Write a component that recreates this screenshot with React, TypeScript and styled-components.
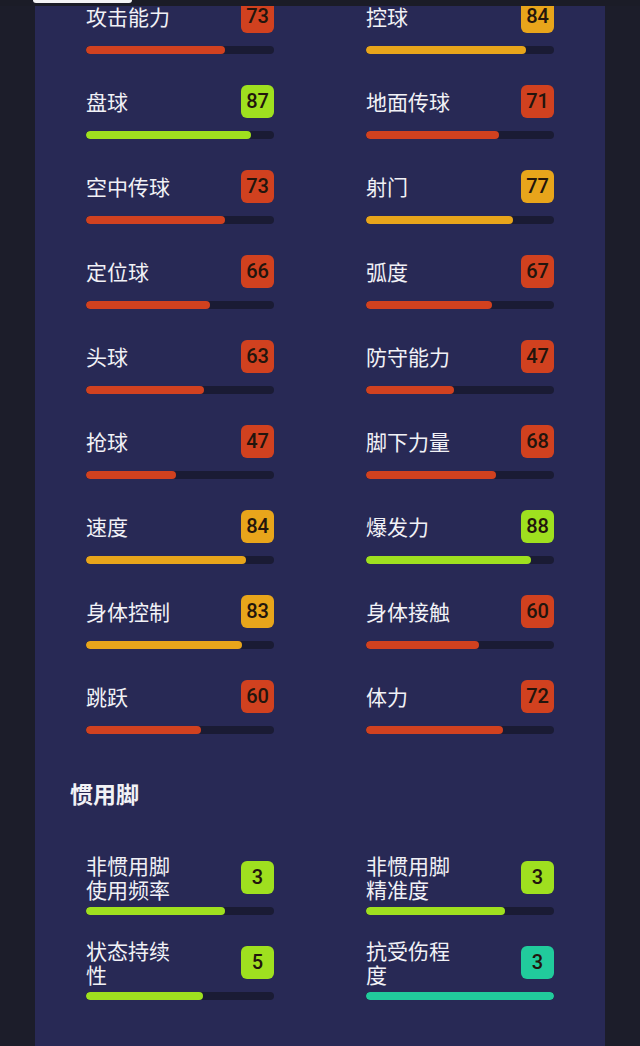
import type { ReactElement } from 'react';
import styled, { createGlobalStyle } from 'styled-components';

type Tone = 'red' | 'yellow' | 'green' | 'teal';

interface Stat {
	label: string;
	value: number;
	fill: number;
	tone: Tone;
}

const tones: Record<Tone, string> = {
	red: '#d1411f',
	yellow: '#e8a51b',
	green: '#9fe01f',
	teal: '#21cb9c',
};

const GlobalStyle = createGlobalStyle`
	html, body {
		margin: 0;
		padding: 0;
		background: #1c1d2a;
	}

	body {
		font-family: 'Noto Sans CJK SC', 'Noto Sans', sans-serif;
		overflow: hidden;
	}
`;

const Page = styled.div`
	width: 640px;
	height: 1046px;
	background: #1c1d2a;
	overflow: hidden;
`;

const TopStrip = styled.div`
	position: fixed;
	top: 0;
	left: 0;
	width: 640px;
	height: 6px;
	background: #1b1c27;
	z-index: 2;
`;

const Pill = styled.div`
	width: 99px;
	height: 3px;
	margin-left: 33px;
	background: #f4f4f6;
	border-radius: 0 0 6px 6px;
`;

const Panel = styled.section`
	display: flow-root;
	width: 570px;
	height: 1046px;
	margin-left: 35px;
	box-sizing: border-box;
	padding: 0 51px;
	background: #282955;
`;

const Grid = styled.div`
	display: grid;
	grid-template-columns: 188px 188px;
	column-gap: 92px;
	row-gap: 23px;
`;

const Scrolled = styled.div`
	margin-top: -8px;
`;

const Heading = styled.h2`
	margin: 44px 0 45px -16px;
	font-size: 23px;
	line-height: 30px;
	font-weight: 700;
	color: #f2f2f6;
`;

const Row = styled.div`
	display: flex;
	flex-direction: column;
`;

const Head = styled.div`
	display: flex;
	align-items: center;
	justify-content: space-between;
	height: 48px;
`;

const Label = styled.span`
	max-width: 90px;
	font-size: 21px;
	line-height: 24px;
	color: #f1f1f6;
`;

const Badge = styled.span<{ $tone: Tone }>`
	display: flex;
	align-items: center;
	justify-content: center;
	width: 33px;
	height: 33px;
	border-radius: 6px;
	background: ${({ $tone }) => tones[$tone]};
	color: #22150d;
	font-family: Roboto, 'Liberation Sans', sans-serif;
	font-size: 20px;
	font-weight: 500;
`;

const Track = styled.div`
	height: 8px;
	margin-top: 6px;
	border-radius: 4px;
	background: #1a1b34;
	overflow: hidden;
`;

const Fill = styled.div<{ $tone: Tone }>`
	height: 100%;
	border-radius: 4px;
	background: ${({ $tone }) => tones[$tone]};
`;

const stats: Stat[] = [
	{ label: '攻击能力', value: 73, fill: 74, tone: 'red' },
	{ label: '控球', value: 84, fill: 85, tone: 'yellow' },
	{ label: '盘球', value: 87, fill: 88, tone: 'green' },
	{ label: '地面传球', value: 71, fill: 71, tone: 'red' },
	{ label: '空中传球', value: 73, fill: 74, tone: 'red' },
	{ label: '射门', value: 77, fill: 78, tone: 'yellow' },
	{ label: '定位球', value: 66, fill: 66, tone: 'red' },
	{ label: '弧度', value: 67, fill: 67, tone: 'red' },
	{ label: '头球', value: 63, fill: 63, tone: 'red' },
	{ label: '防守能力', value: 47, fill: 47, tone: 'red' },
	{ label: '抢球', value: 47, fill: 48, tone: 'red' },
	{ label: '脚下力量', value: 68, fill: 69, tone: 'red' },
	{ label: '速度', value: 84, fill: 85, tone: 'yellow' },
	{ label: '爆发力', value: 88, fill: 88, tone: 'green' },
	{ label: '身体控制', value: 83, fill: 83, tone: 'yellow' },
	{ label: '身体接触', value: 60, fill: 60, tone: 'red' },
	{ label: '跳跃', value: 60, fill: 61, tone: 'red' },
	{ label: '体力', value: 72, fill: 73, tone: 'red' },
];

const foot: Stat[] = [
	{ label: '非惯用脚使用频率', value: 3, fill: 74, tone: 'green' },
	{ label: '非惯用脚精准度', value: 3, fill: 74, tone: 'green' },
	{ label: '状态持续性', value: 5, fill: 62, tone: 'green' },
	{ label: '抗受伤程度', value: 3, fill: 100, tone: 'teal' },
];

function StatRow({ data }: { data: Stat }): ReactElement {
	return (
		<Row>
			<Head>
				<Label>{data.label}</Label>
				<Badge $tone={data.tone}>{data.value}</Badge>
			</Head>
			<Track>
				<Fill
					$tone={data.tone}
					style={{ width: `${data.fill}%` }}
				/>
			</Track>
		</Row>
	);
}

export default function App(): ReactElement {
	return (
		<Page>
			<GlobalStyle />
			<TopStrip>
				<Pill />
			</TopStrip>
			<Panel>
				<Scrolled>
					<Grid>
						{stats.map((s) => (
							<StatRow
								key={s.label}
								data={s}
							/>
						))}
					</Grid>
					<Heading>惯用脚</Heading>
					<Grid>
						{foot.map((s) => (
							<StatRow
								key={s.label}
								data={s}
							/>
						))}
					</Grid>
				</Scrolled>
			</Panel>
		</Page>
	);
}
